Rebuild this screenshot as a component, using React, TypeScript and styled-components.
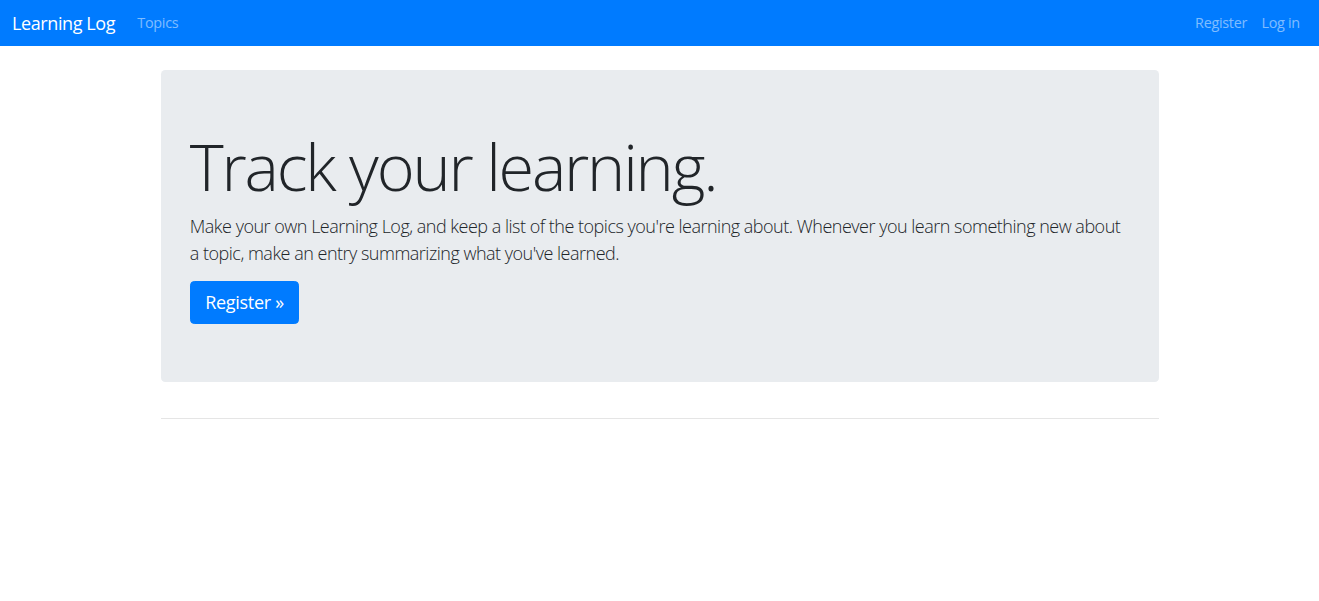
import React from "react";
import styled, { createGlobalStyle } from "styled-components";

const Global = createGlobalStyle`
  html { font-size: 14.4px; }
  body {
    margin: 0;
    font-family: "Open Sans", "Noto Sans", sans-serif;
    font-size: 1rem;
    line-height: 1.5;
    color: #212529;
    background: #fff;
  }
  * { box-sizing: border-box; }
`;

const Navbar = styled.nav`
  height: 46px;
  background: #007bff;
  display: flex;
  align-items: center;
  padding: 0 12px 0 12px;
`;

const Brand = styled.a`
  font-size: 18px;
  letter-spacing: -0.4px;
  color: #fff;
  margin-right: 15px;
  white-space: nowrap;
  text-decoration: none;
`;

const NavList = styled.div<{ $right?: boolean }>`
  display: flex;
  margin-left: ${(p) => (p.$right ? "auto" : "0")};
`;

const NavLink = styled.a`
  color: rgba(255, 255, 255, 0.5);
  padding: 0 7.2px;
  font-size: 14.4px;
  letter-spacing: -0.3px;
  text-decoration: none;
`;

const Main = styled.main`
  width: 999px;
  margin: 24px auto 0;
  padding-left: 1px;
`;

const Jumbotron = styled.section`
  background: #e9ecef;
  border-radius: 4.3px;
  padding: 57.6px 28.8px;
  margin-bottom: 36px;
`;

const Display = styled.h1`
  font-size: 64.8px;
  font-weight: 300;
  letter-spacing: -2.2px;
  line-height: 1.2;
  margin: 0 0 7.2px;
`;

const Lead = styled.p`
  font-size: 18px;
  font-weight: 300;
  letter-spacing: -0.5px;
  line-height: 1.5;
  margin: 0 0 14.4px;
`;

const Button = styled.a`
  display: inline-block;
  background: #007bff;
  color: #fff;
  font-size: 18px;
  letter-spacing: -0.3px;
  line-height: 1.5;
  padding: 7.2px 14.4px;
  border: 1px solid #007bff;
  border-radius: 4.3px;
  text-decoration: none;
`;

const Rule = styled.hr`
  border: 0;
  border-top: 1px solid rgba(0, 0, 0, 0.1);
  margin: 0;
`;

export default function App() {
  return (
    <>
      <Global />
      <Navbar>
        <Brand href="#">Learning Log</Brand>
        <NavList>
          <NavLink href="#">Topics</NavLink>
        </NavList>
        <NavList $right>
          <NavLink href="#">Register</NavLink>
          <NavLink href="#">Log in</NavLink>
        </NavList>
      </Navbar>
      <Main>
        <Jumbotron>
          <Display>Track your learning.</Display>
          <Lead>
            Make your own Learning Log, and keep a list of the topics you're learning about.
            Whenever you learn something new about a topic, make an entry summarizing what
            you've learned.
          </Lead>
          <Button href="#">Register »</Button>
        </Jumbotron>
        <Rule />
      </Main>
    </>
  );
}
